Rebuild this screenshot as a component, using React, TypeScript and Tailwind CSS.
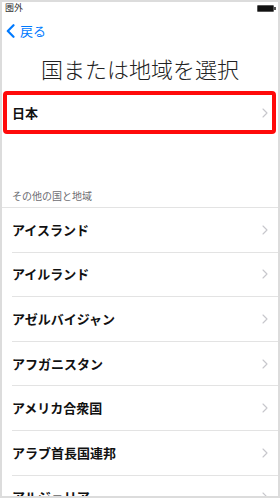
import React from 'react'

const countries = [
  'アイスランド',
  'アイルランド',
  'アゼルバイジャン',
  'アフガニスタン',
  'アメリカ合衆国',
  'アラブ首長国連邦',
  'アルジェリア',
]

function Chevron() {
  return (
    <svg width="6" height="10" viewBox="0 0 6 10" fill="none" className="shrink-0">
      <path d="M1 1l4 4-4 4" stroke="#c7c7cc" strokeWidth="1.1" strokeLinecap="round" strokeLinejoin="round" />
    </svg>
  )
}

export default function App() {
  return (
    <div
      className="w-[280px] h-[498px] overflow-hidden bg-white border-2 border-[#dcdcdc] flex flex-col"
      style={{ fontFamily: '"Noto Sans CJK JP", "Noto Sans", sans-serif' }}
    >
      {/* status bar */}
      <div className="h-[12px] shrink-0 flex items-center justify-between pl-[3px] pr-[2px]">
        <span className="text-[9px] leading-[10px] text-[#333]">圏外</span>
        <div className="flex items-center">
          <div className="w-[17px] h-[7px] bg-[#111] border border-[#555] rounded-[1px]" />
          <div className="w-[2px] h-[3px] bg-[#555]" />
        </div>
      </div>

      {/* nav bar */}
      <div className="h-[34px] shrink-0 flex items-center pl-[4px] gap-[5px]">
        <svg width="9" height="14" viewBox="0 0 9 14" fill="none">
          <path d="M7.5 1.2L1.8 7l5.7 5.8" stroke="#007aff" strokeWidth="2.2" strokeLinecap="round" strokeLinejoin="round" />
        </svg>
        <span className="text-[13px] leading-[16px] text-[#007aff]">戻る</span>
      </div>

      {/* title */}
      <div className="h-[40px] shrink-0 flex items-center justify-center">
        <h1 className="text-[22px] leading-[26px] font-light text-[#222] tracking-[0px]">国または地域を選択</h1>
      </div>

      {/* highlighted row */}
      <div className="mt-[3px] ml-[1px] mr-[2px] h-[43px] shrink-0 border-4 border-[#ff0a0a] rounded-[4px] flex items-center justify-between pl-[5px] pr-[4px]">
        <span className="text-[13px] leading-[16px] font-bold text-[#111]">日本</span>
        <Chevron />
      </div>

      {/* section header */}
      <div className="h-[74px] shrink-0 flex items-end pl-[10px] pb-[5px] border-b border-[#e3e3e3]">
        <span className="text-[10px] leading-[12px] text-[#6d6d72]">その他の国と地域</span>
      </div>

      {/* list */}
      <div className="flex flex-col">
        {countries.map((name) => (
          <div key={name} className="h-[44.6px] shrink-0 pl-[10px] flex">
            <div className="flex-1 flex items-center justify-between pr-[10px] border-b border-[#e3e3e3]">
              <span className="text-[13px] leading-[16px] font-bold text-[#111]">{name}</span>
              <Chevron />
            </div>
          </div>
        ))}
      </div>
    </div>
  )
}
